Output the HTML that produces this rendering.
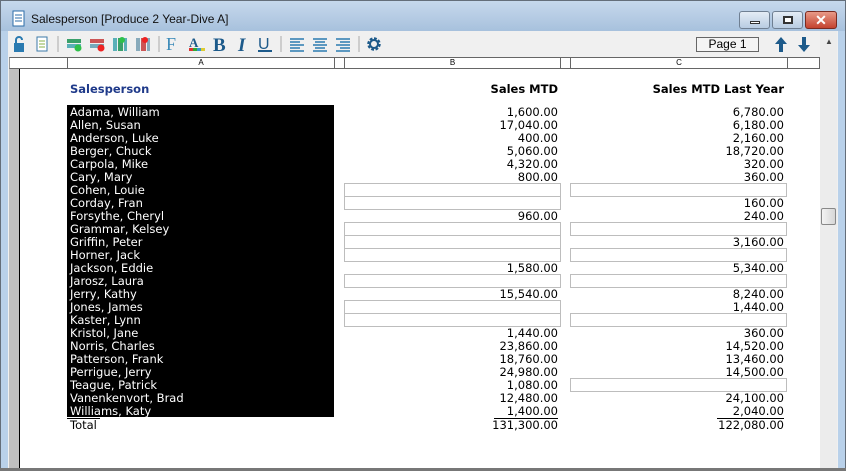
<!DOCTYPE html>
<html><head><style>
*{margin:0;padding:0;box-sizing:border-box}
body{width:846px;height:471px;overflow:hidden;background:#b9d1ea;font-family:"Liberation Sans",sans-serif;position:relative}
.a{position:absolute}
.t{font-family:"DejaVu Sans",sans-serif;font-size:11.5px;line-height:13px;white-space:nowrap}
.r{text-align:right}
.box{position:absolute;border:1px solid #bdbdbd;background:#fff;height:14px}
</style></head><body>
<div class="a" style="left:0;top:0;width:846px;height:31px;background:linear-gradient(#c6d8ec,#a7c1dd);border:1px solid #6e7c8c;border-bottom:none"></div>
<div class="a" style="left:0;top:0;width:846px;height:471px;border:1px solid #646e7a"></div>
<svg class="a" style="left:12px;top:10px" width="14" height="17"><rect x="1" y="1" width="11" height="15" fill="#fff" stroke="#2e6ea8"/><path d="M3 5h7M3 8h7M3 11h7" stroke="#2e6ea8"/></svg>
<div class="a" style="left:31px;top:12px;font-size:12px;color:#111;white-space:nowrap">Salesperson [Produce 2 Year-Dive A]</div>
<div class="a" style="left:739px;top:11px;width:31px;height:18px;border:1px solid #6f7f92;border-radius:3px;background:linear-gradient(#e4ecf5,#b8cce2)"><div class="a" style="left:10px;top:9px;width:10px;height:3px;border:1px solid #333;background:#fff"></div></div>
<div class="a" style="left:772px;top:11px;width:31px;height:18px;border:1px solid #6f7f92;border-radius:3px;background:linear-gradient(#e4ecf5,#b8cce2)"><div class="a" style="left:10px;top:4px;width:10px;height:8px;border:2px solid #333;background:#fff"></div></div>
<div class="a" style="left:805px;top:11px;width:32px;height:18px;border:1px solid #7a2a20;border-radius:3px;background:linear-gradient(#e89a88,#c4432f);color:#fff;font-weight:bold;font-size:14px;line-height:16px;text-align:center">✕</div>
<div class="a" style="left:8px;top:31px;width:830px;height:437px;background:#f0f0f0"></div>
<div class="a" style="left:0;top:468px;width:846px;height:3px;background:#777"></div>
<svg class="a" style="left:12px;top:35px" width="370" height="18">
<path d="M4 8V5a3 3 0 0 1 6 0" stroke="#2a7ab0" stroke-width="2" fill="none"/><rect x="2" y="8" width="10" height="9" fill="#2a7ab0"/>
<rect x="25" y="2" width="10" height="14" fill="#fff" stroke="#3c7aa8"/><path d="M27 6h6M27 9h6M27 12h6" stroke="#8ab04a"/>
<line x1="46" y1="1" x2="46" y2="17" stroke="#aaa"/>
<rect x="55" y="4" width="14" height="4" fill="#3aa06a"/><rect x="55" y="9" width="14" height="4" fill="#5ab0b8"/><circle cx="66" cy="13" r="3.5" fill="#2ec04a"/>
<rect x="78" y="4" width="14" height="4" fill="#c55"/><rect x="78" y="9" width="14" height="4" fill="#7ab"/><circle cx="89" cy="13" r="3.5" fill="#e22"/>
<rect x="101" y="3" width="4" height="13" fill="#5ab0b8"/><rect x="106" y="3" width="5" height="13" fill="#3aa06a"/><rect x="112" y="3" width="3" height="13" fill="#5ab0b8"/><circle cx="110" cy="5" r="3" fill="#2ec04a"/>
<rect x="124" y="3" width="4" height="13" fill="#8ab"/><rect x="129" y="3" width="5" height="13" fill="#c55"/><rect x="135" y="3" width="3" height="13" fill="#8ab"/><circle cx="133" cy="5" r="3" fill="#e22"/>
<line x1="147" y1="1" x2="147" y2="17" stroke="#aaa"/>
<text x="154" y="15" font-family="Liberation Serif" font-size="18" fill="#3a8ab8">F</text>
<text x="177" y="12" font-family="Liberation Serif" font-size="13" font-weight="bold" fill="#1d5a8a">A</text><rect x="177" y="13" width="4" height="3" fill="#d33"/><rect x="181" y="13" width="4" height="3" fill="#3a3"/><rect x="185" y="13" width="4" height="3" fill="#39c"/><rect x="189" y="13" width="4" height="3" fill="#dc3"/>
<text x="201" y="16" font-family="Liberation Serif" font-size="19" font-weight="bold" fill="#1d5a8a">B</text>
<text x="226" y="16" font-family="Liberation Serif" font-size="19" font-style="italic" font-weight="bold" fill="#1d5a8a">I</text>
<text x="246" y="14" font-family="Liberation Sans" font-size="16" fill="#1d5a8a">U</text><rect x="246" y="15" width="14" height="2" fill="#1d5a8a"/>
<line x1="269" y1="1" x2="269" y2="17" stroke="#aaa"/>
<path d="M278 4h14M278 7h10M278 10h14M278 13h10M278 16h14" stroke="#2a7ab0" stroke-width="1.5"/>
<path d="M301 4h14M303 7h10M301 10h14M303 13h10M301 16h14" stroke="#2a7ab0" stroke-width="1.5"/>
<path d="M324 4h14M328 7h10M324 10h14M328 13h10M324 16h14" stroke="#2a7ab0" stroke-width="1.5"/>
<line x1="347" y1="1" x2="347" y2="17" stroke="#aaa"/>
<circle cx="362" cy="9" r="5" fill="none" stroke="#1d5a8a" stroke-width="3.5" stroke-dasharray="2.5 1.4"/><circle cx="362" cy="9" r="4" fill="none" stroke="#1d5a8a" stroke-width="2"/>
</svg>
<div class="a" style="left:696px;top:37px;width:63px;height:15px;border:1px solid #666;background:#f4f4f4;text-align:center;font-size:12px;line-height:13px">Page 1</div>
<svg class="a" style="left:773px;top:36px" width="40" height="17"><path d="M8 1l-6 7h4v8h4V8h4z" fill="#1d5a8a"/><path d="M31 16l-6-7h4V1h4v8h4z" fill="#1d5a8a"/></svg>
<div class="a" style="left:9px;top:57px;width:811px;height:12px;background:#fff;border:1px solid #666;border-left:1px solid #999"></div>
<div class="a" style="left:67px;top:58px;width:1px;height:10px;background:#666"></div>
<div class="a" style="left:334px;top:58px;width:1px;height:10px;background:#666"></div>
<div class="a" style="left:344px;top:58px;width:1px;height:10px;background:#666"></div>
<div class="a" style="left:560px;top:58px;width:1px;height:10px;background:#666"></div>
<div class="a" style="left:570px;top:58px;width:1px;height:10px;background:#666"></div>
<div class="a" style="left:787px;top:58px;width:1px;height:10px;background:#666"></div>
<div class="a" style="left:68px;top:58px;width:266px;font-size:8px;text-align:center">A</div>
<div class="a" style="left:345px;top:58px;width:215px;font-size:8px;text-align:center">B</div>
<div class="a" style="left:571px;top:58px;width:216px;font-size:8px;text-align:center">C</div>
<div class="a" style="left:9px;top:69px;width:10px;height:399px;background:#c0c0c0"></div>
<div class="a" style="left:19px;top:69px;width:801px;height:399px;background:#fff;border-left:1px solid #000"></div>
<div class="a" style="left:820px;top:31px;width:17px;height:437px;background:#ececec"></div>
<div class="a" style="left:825px;top:37px;font-size:8px;color:#444">▲</div>
<div class="a" style="left:821px;top:208px;width:15px;height:17px;border:1px solid #888;border-radius:2px;background:linear-gradient(90deg,#f4f4f4,#d6d6d6)"></div>
<div class="a t" style="left:70px;top:83px;font-weight:bold;color:#1f3a8a">Salesperson</div>
<div class="a t r" style="left:400px;top:83px;width:158px;font-weight:bold">Sales MTD</div>
<div class="a t r" style="left:580px;top:83px;width:204px;font-weight:bold">Sales MTD Last Year</div>
<div class="a" style="left:67px;top:105px;width:267px;height:312px;background:#000"></div>
<div id="rows"></div>
<div class="a" style="left:67px;top:418px;width:33px;height:1px;background:#000"></div>
<div class="a t" style="left:70px;top:419px">Total</div>
<div class="a" style="left:494px;top:418px;width:64px;height:1px;background:#000"></div>
<div class="a t r" style="left:460px;top:419px;width:98px">131,300.00</div>
<div class="a" style="left:717px;top:418px;width:67px;height:1px;background:#000"></div>
<div class="a t r" style="left:680px;top:419px;width:104px">122,080.00</div>
<script>
var d=[["Adama, William","1,600.00","6,780.00"],["Allen, Susan","17,040.00","6,180.00"],["Anderson, Luke","400.00","2,160.00"],["Berger, Chuck","5,060.00","18,720.00"],["Carpola, Mike","4,320.00","320.00"],["Cary, Mary","800.00","360.00"],["Cohen, Louie","",""],["Corday, Fran","","160.00"],["Forsythe, Cheryl","960.00","240.00"],["Grammar, Kelsey","",""],["Griffin, Peter","","3,160.00"],["Horner, Jack","",""],["Jackson, Eddie","1,580.00","5,340.00"],["Jarosz, Laura","",""],["Jerry, Kathy","15,540.00","8,240.00"],["Jones, James","","1,440.00"],["Kaster, Lynn","",""],["Kristol, Jane","1,440.00","360.00"],["Norris, Charles","23,860.00","14,520.00"],["Patterson, Frank","18,760.00","13,460.00"],["Perrigue, Jerry","24,980.00","14,500.00"],["Teague, Patrick","1,080.00",""],["Vanenkenvort, Brad","12,480.00","24,100.00"],["Williams, Katy","1,400.00","2,040.00"]];
var h="";d.forEach(function(r,i){var y=105+i*13,ty=y+1;
h+='<div class="a t" style="left:70px;top:'+ty+'px;color:#fff">'+r[0]+'</div>';
if(r[1])h+='<div class="a t r" style="left:440px;top:'+ty+'px;width:118px">'+r[1]+'</div>';else h+='<div class="box" style="left:344px;top:'+y+'px;width:217px"></div>';
if(r[2])h+='<div class="a t r" style="left:660px;top:'+ty+'px;width:124px">'+r[2]+'</div>';else h+='<div class="box" style="left:570px;top:'+y+'px;width:217px"></div>';
});document.getElementById("rows").innerHTML=h;
</script>
</body></html>
